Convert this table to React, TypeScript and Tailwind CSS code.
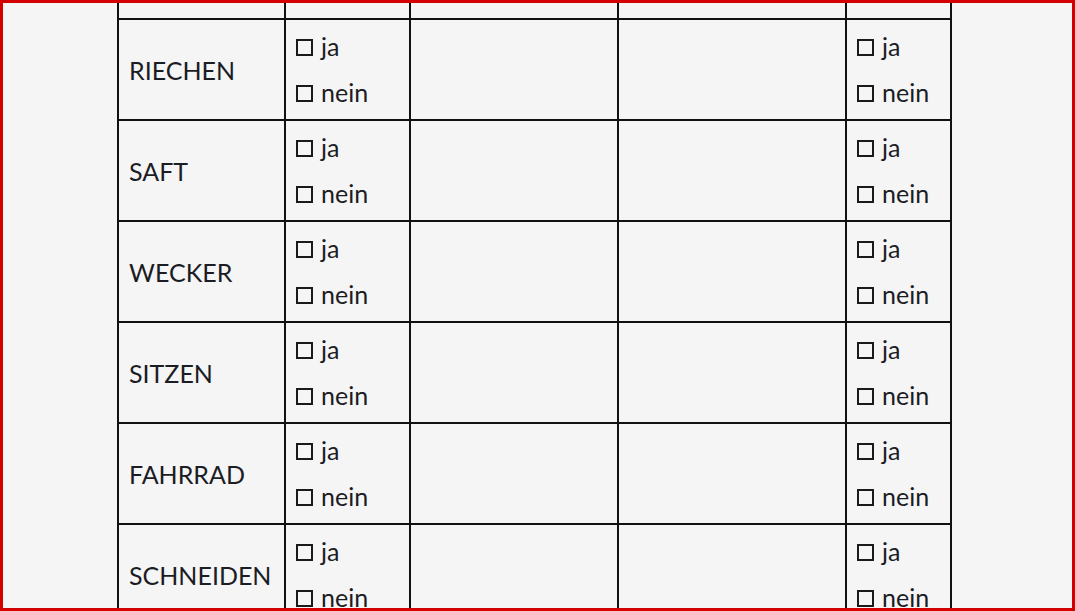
import React from "react"

const words = ["RIECHEN", "SAFT", "WECKER", "SITZEN", "FAHRRAD", "SCHNEIDEN"]

function Box() {
  return <span className="inline-block w-[17px] h-[17px] border-2 border-[#1a1a1a] mr-[8px] translate-y-[1px]" />
}

function JaNein() {
  return (
    <div className="flex flex-col gap-[20px] pl-[10px] pt-[13px]">
      <div className="flex items-center h-[26px]">
        <Box />
        <span>ja</span>
      </div>
      <div className="flex items-center h-[26px]">
        <Box />
        <span>nein</span>
      </div>
    </div>
  )
}

export default function App() {
  return (
    <div
      className="w-[1075px] h-[611px] border-[3px] border-[#d40000] bg-[#f5f5f6] overflow-hidden text-[#1c1c24]"
      style={{ fontFamily: "Lato, 'Open Sans', sans-serif" }}
    >
      <table className="border-collapse table-fixed ml-[114px] mt-[-86px] text-[25px] leading-none">
        <colgroup>
          <col className="w-[167px]" />
          <col className="w-[125px]" />
          <col className="w-[208px]" />
          <col className="w-[228px]" />
          <col className="w-[105px]" />
        </colgroup>
        <tbody>
          <tr className="h-[101px]">
            {[0, 1, 2, 3, 4].map(i => (
              <td key={i} className="border-2 border-[#111]" />
            ))}
          </tr>
          {words.map(w => (
            <tr key={w} className="h-[101px]">
              <td className="border-2 border-[#111] pl-[10px] pt-[2px] align-middle">{w}</td>
              <td className="border-2 border-[#111] p-0 align-top"><JaNein /></td>
              <td className="border-2 border-[#111]" />
              <td className="border-2 border-[#111]" />
              <td className="border-2 border-[#111] p-0 align-top"><JaNein /></td>
            </tr>
          ))}
        </tbody>
      </table>
    </div>
  )
}
